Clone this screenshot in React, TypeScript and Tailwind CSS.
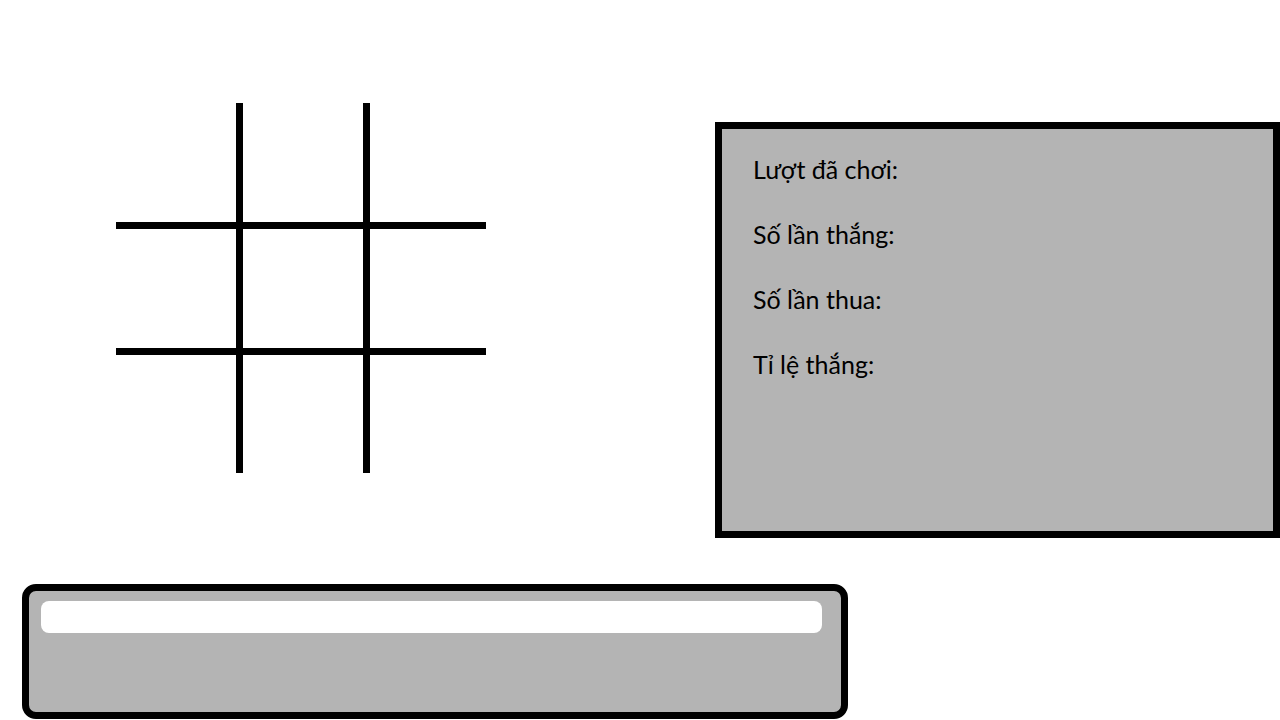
const STATS = ['Lượt đã chơi:', 'Số lần thắng:', 'Số lần thua:', 'Tỉ lệ thắng:']

function Board() {
  return (
    <div className="mt-[103px] ml-[116px] grid h-[370px] w-[370px] grid-cols-[120px_7px_120px_7px_116px] grid-rows-[119px_7px_119px_7px_118px]">
      {/* horizontal lines */}
      <div className="col-start-1 col-end-6 row-start-2 bg-black" />
      <div className="col-start-1 col-end-6 row-start-4 bg-black" />
      {/* vertical lines */}
      <div className="col-start-2 row-start-1 row-end-6 bg-black" />
      <div className="col-start-4 row-start-1 row-end-6 bg-black" />
    </div>
  )
}

function StatsPanel() {
  return (
    <div className="mt-[122px] ml-auto h-[416px] w-[565px] border-[7px] border-black bg-[#b4b4b4] pt-[8px] pl-[31px]">
      {STATS.map((label) => (
        <div key={label} className="text-[25px] leading-[65px] text-black">
          {label}
        </div>
      ))}
    </div>
  )
}

export default function App() {
  return (
    <div className="flex h-[720px] w-[1280px] flex-col overflow-hidden bg-white font-['Lato','Noto_Sans',sans-serif]">
      <div className="flex h-[584px] items-start">
        <Board />
        <StatsPanel />
      </div>

      {/* message box */}
      <div className="ml-[22px] h-[135px] w-[826px] rounded-[14px] border-[7px] border-black bg-[#b4b4b4] pt-[10px] pl-[12px]">
        <div className="h-[32px] w-[781px] rounded-[8px] bg-white" />
      </div>
    </div>
  )
}
